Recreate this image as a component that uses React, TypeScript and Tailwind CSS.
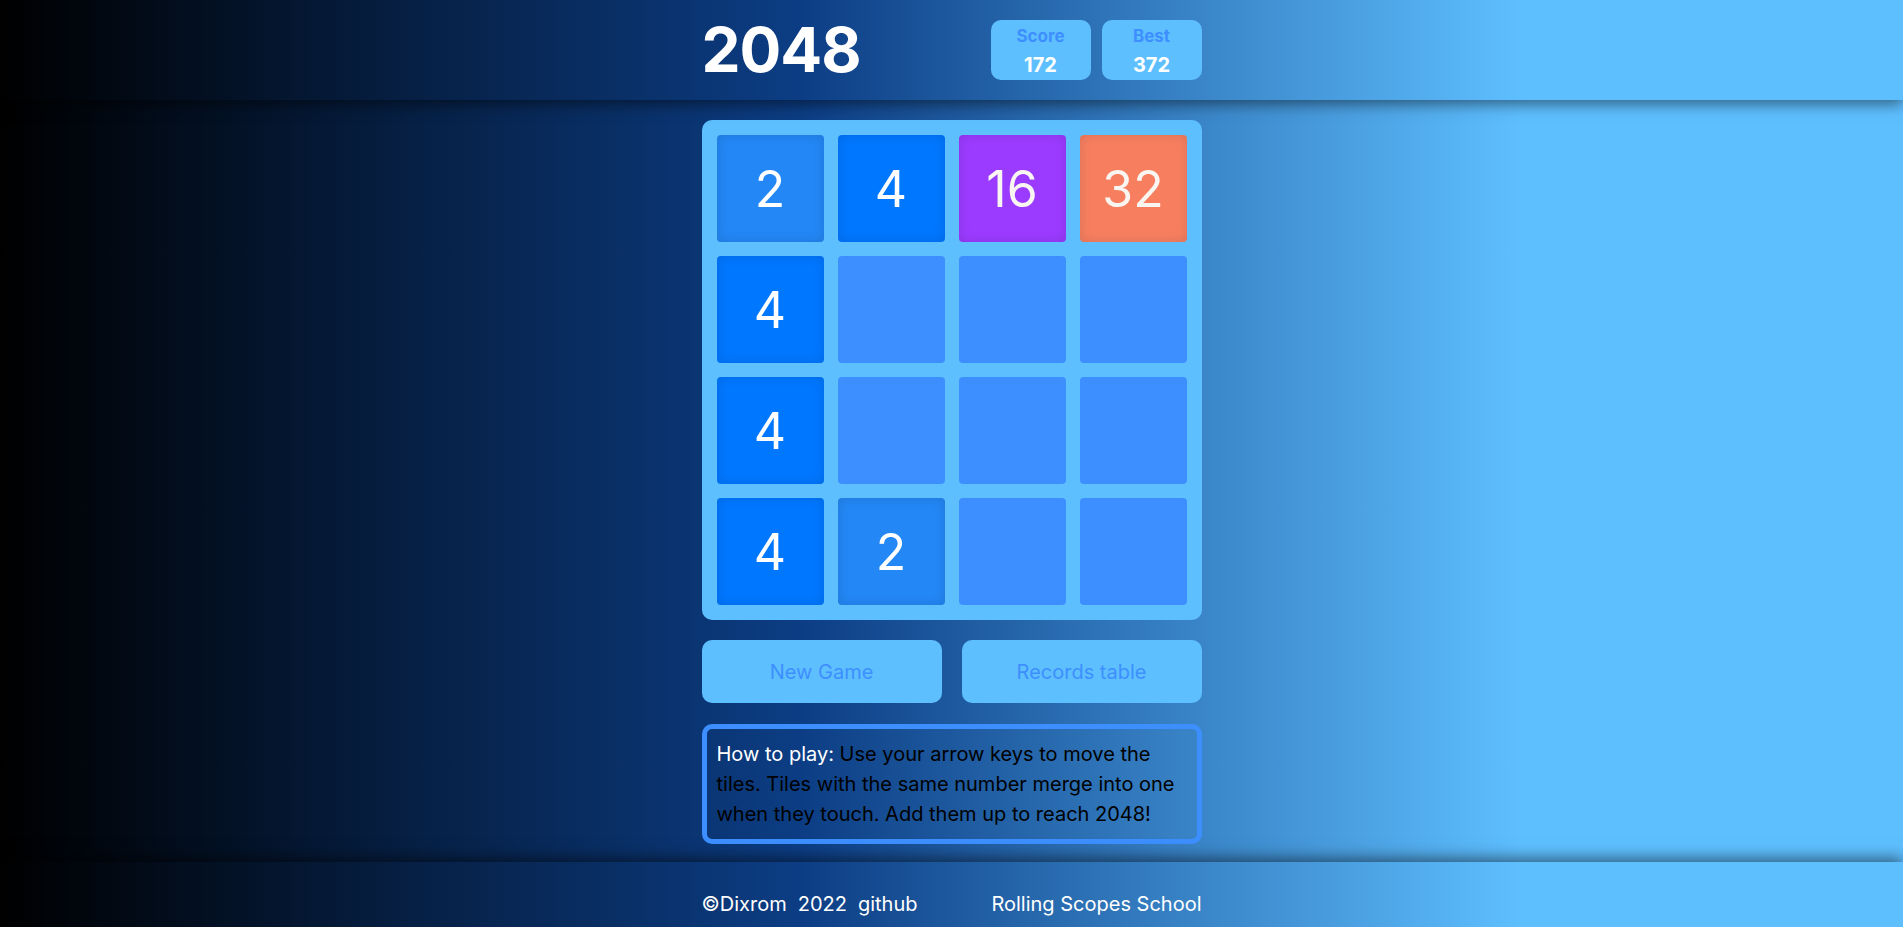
import React from 'react';

type Cell = number | null;

const board: Cell[] = [
  2, 4, 16, 32,
  4, null, null, null,
  4, null, null, null,
  4, 2, null, null,
];

const tileStyles: Record<number, string> = {
  2: 'bg-[#2387f5] text-white',
  4: 'bg-[#0077ff] text-white',
  16: 'bg-[#9b3bff] text-[#f9f6f2]',
  32: 'bg-[#f77f60] text-[#f9f6f2]',
};

const Tile = ({ value }: { value: Cell }) => {
  if (value === null) {
    return <div className="h-[107px] rounded-[4px] bg-[#3d8fff]" />;
  }
  return (
    <div
      className={`h-[107px] rounded-[4px] flex items-center justify-center text-[50px] font-normal leading-none shadow-[inset_0_0_12px_rgba(0,0,0,0.12)] ${tileStyles[value]}`}
    >
      {value}
    </div>
  );
};

const ScoreBox = ({ label, value }: { label: string; value: number }) => (
  <div className="w-[100px] h-[60px] rounded-[10px] bg-[#5ebfff] flex flex-col items-center pt-[6px]">
    <span className="text-[17px] font-bold leading-[20px] text-[#3d8fff]">{label}</span>
    <span className="text-[20px] font-bold leading-[26px] text-white mt-[6px]">{value}</span>
  </div>
);

const App = () => {
  return (
    <div className="h-screen flex flex-col bg-[linear-gradient(90deg,#000_0%,#0c3d84_42%,#5ebfff_80%)] font-['Inter',sans-serif]">
      <header className="h-[100px] shrink-0 relative z-10 shadow-[0_4px_14px_rgba(0,0,0,0.5)]">
        <div className="w-[500px] mx-auto h-full flex items-center justify-between">
          <h1 className="text-[62px] font-bold leading-none text-white tracking-[-1px]">2048</h1>
          <div className="flex gap-[11px]">
            <ScoreBox label="Score" value={172} />
            <ScoreBox label="Best" value={372} />
          </div>
        </div>
      </header>

      <main className="flex-1 pt-5">
        <div className="w-[500px] mx-auto">
          {/* Board */}
          <div className="p-[15px] rounded-[10px] bg-[#5ebfff] grid grid-cols-4 gap-[14px]">
            {board.map((cell, i) => (
              <Tile key={i} value={cell} />
            ))}
          </div>

          {/* Buttons */}
          <div className="mt-5 flex gap-5">
            <button className="flex-1 h-[63px] rounded-[10px] bg-[#5ebfff] text-[20px] text-[#3d8fff]">
              New Game
            </button>
            <button className="flex-1 h-[63px] rounded-[10px] bg-[#5ebfff] text-[20px] text-[#3d8fff]">
              Records table
            </button>
          </div>

          {/* How to play */}
          <div className="mt-[21px] border-[5px] border-[#3d8fff] rounded-[10px] px-[10px] py-[10px] text-[20px] leading-[30px] text-black">
            <span className="text-white">How to play: </span>
            Use your arrow keys to move the tiles. Tiles with the same number merge into one when they
            touch. Add them up to reach 2048!
          </div>
        </div>
      </main>

      <footer className="h-[65px] shrink-0 relative z-10 shadow-[0_-4px_14px_rgba(0,0,0,0.5)]">
        <div className="w-[500px] mx-auto h-full flex items-center justify-between pt-[19px] text-[20px] text-white">
          <div className="flex gap-[11px]">
            <span>©Dixrom</span>
            <span>2022</span>
            <a href="#">github</a>
          </div>
          <a href="#">Rolling Scopes School</a>
        </div>
      </footer>
    </div>
  );
};

export default App;
